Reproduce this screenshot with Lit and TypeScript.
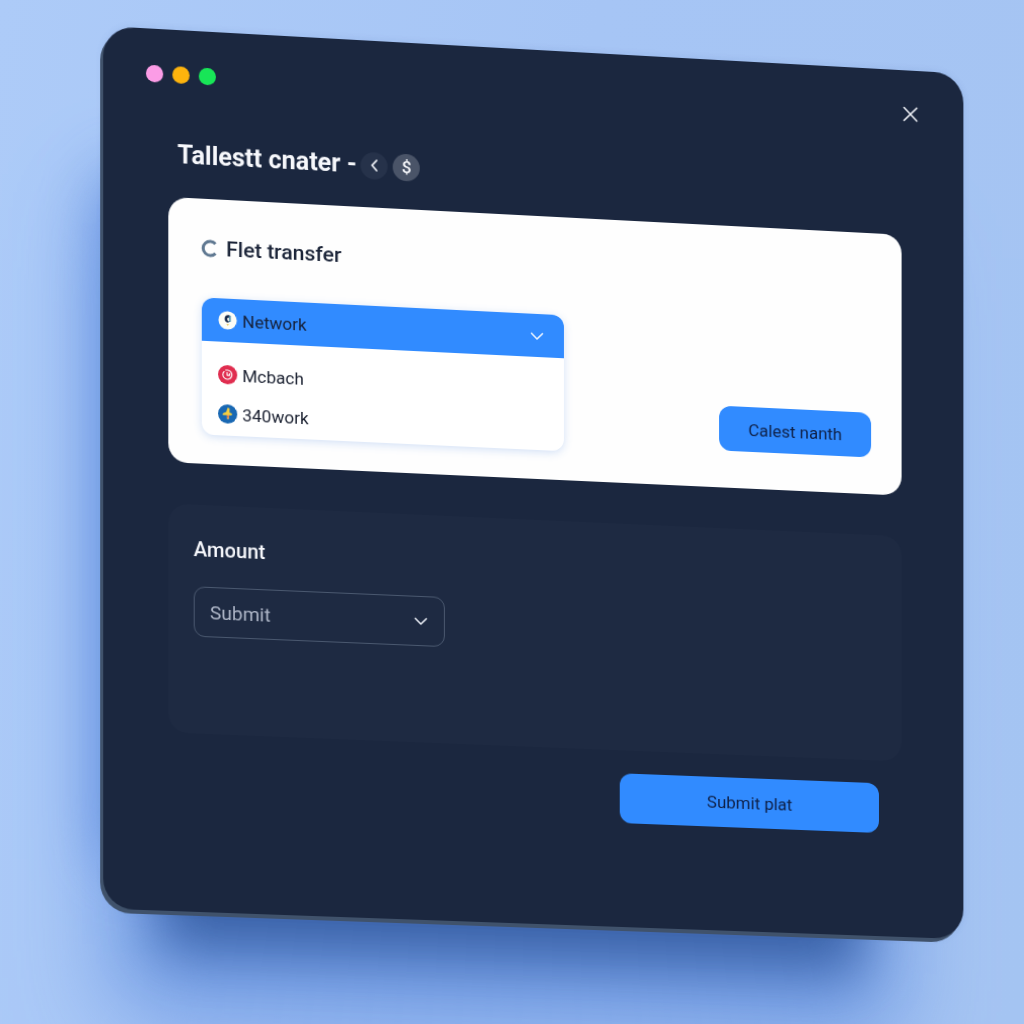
import { LitElement, html, css, svg } from "lit";
import { customElement, state } from "lit/decorators.js";

const chevronDown = html`<svg class="chevron" viewBox="0 0 14 14" aria-hidden="true">
  <path d="M1.500 4.500 7 10l5.500-5.500" />
</svg>`;

const networkMark = svg`
  <circle cx="10" cy="10" r="9.500" fill="#fdfdf6" />
  <path d="M12.300 4.800C9.500 3.600 6.700 5.400 6.900 8.600c.1 2.300 1.700 3.900 4.100 3.700l.3-1.400-1.700-1.200.1-2 1.600-.6z" fill="#17294a" />
  <path d="M11 5.400 13.200 5v6.200l-2.100.6.900-2.500-1-.8 1-1.200z" fill="#3d86a8" />
  <path d="M8.800 13.600h2.600l-1.200 2.400z" fill="#e9cf6a" />`;

const clockMark = svg`
  <circle cx="10" cy="10" r="10" fill="#e02d4f" />
  <path d="M6.700 6.400A4.700 4.700 0 1 0 10.200 5.300H7.600M9.500 7.400v3.200h2.600V8.500" fill="none" stroke="#fff" stroke-width="1.200" stroke-linejoin="round" />`;

const crossMark = svg`
  <circle cx="10" cy="10" r="10" fill="#1968b3" />
  <path d="M10 3.500 12 4v4.500l2.800 1-.8 1.800H4.800l.3-1.800L8.500 8z" fill="#f6cf3f" />
  <path d="M9.200 10.500h2.300v4.700H9.200z" fill="#f3b052" />
  <path d="M9.500 12h1.600v1.500H9.500z" fill="#c9534a" />`;

@customElement("app-root")
export class AppRoot extends LitElement {
  @state() private open = true;

  static styles = css`
    :host {
      display: block;
      font-family: Roboto, Inter, "Liberation Sans", sans-serif;
      color: #16213a;
    }
    * {
      box-sizing: border-box;
    }
    button,
    select {
      font: inherit;
      color: inherit;
      border: 0;
      margin: 0;
      padding: 0;
      background: none;
      cursor: pointer;
    }
    h1,
    h2,
    ul {
      margin: 0;
      padding: 0;
    }
    .stage {
      min-height: 100vh;
      padding: 50px 56px 64px 107px;
      overflow: hidden;
      background: linear-gradient(100deg, #adcbf8 0%, #a6c5f5 50%, #a5c4f2 100%);
    }
    .window {
      padding-bottom: 104px;
      border-radius: 30px;
      background: #1b273f;
      transform: perspective(2000px) rotateY(2.6deg) skewY(2.6deg);
      box-shadow:
        -3px 4px 0 #40526b,
        0 0 6px 1px rgba(64, 100, 170, 0.12),
        -24px 116px 52px -80px #3a62a8,
        -96px 50px 60px -96px #6390e0,
        -30px 144px 90px -40px #709ae3;
    }
    .bar {
      display: flex;
      align-items: center;
      justify-content: space-between;
      padding: 28px 38px 0 42px;
    }
    .dots {
      display: flex;
      gap: 9px;
    }
    .dot {
      width: 17px;
      height: 17px;
      border-radius: 50%;
    }
    .pink {
      background: #fb9ce6;
    }
    .amber {
      background: #fdb30d;
    }
    .green {
      background: #18e557;
    }
    .close {
      display: grid;
      place-items: center;
      width: 32px;
      height: 32px;
    }
    .close svg {
      width: 16px;
      height: 16px;
      fill: none;
      stroke: #f4f6fb;
      stroke-width: 1.6;
      stroke-linecap: round;
    }
    .title {
      display: flex;
      align-items: center;
      height: 32px;
      margin: 48px 60px 26px 73px;
      color: #f7f8fc;
    }
    .title h1 {
      font-size: 25px;
      line-height: 32px;
      font-weight: 700;
      margin-right: 4px;
      white-space: nowrap;
    }
    .round {
      display: grid;
      place-items: center;
      width: 27px;
      height: 27px;
      border-radius: 50%;
      background: #26324a;
      font-size: 17px;
      line-height: 24px;
      font-weight: 500;
    }
    .round + .round {
      margin-left: 5px;
      background: #4a5468;
    }
    .round svg {
      width: 14px;
      height: 14px;
      fill: none;
      stroke: #f4f6fb;
      stroke-width: 1.8;
      stroke-linecap: round;
      stroke-linejoin: round;
    }
    .card {
      margin: 0 63px 0 64px;
      padding: 34px 31px 29px 33px;
      border-radius: 19px;
      background: #fefefe;
    }
    .heading {
      display: flex;
      align-items: center;
      gap: 7px;
      margin-bottom: 34px;
    }
    .heading svg {
      width: 17px;
      height: 20px;
      overflow: visible;
      fill: none;
      stroke: #5f7891;
      stroke-width: 3;
    }
    .heading h2 {
      font-size: 21px;
      line-height: 30px;
      font-weight: 500;
      color: #1b2438;
    }
    .row {
      display: flex;
      justify-content: space-between;
      align-items: flex-end;
    }
    .dropdown {
      flex: 0 1 360px;
      min-height: 136px;
      border-radius: 12px;
      overflow: hidden;
      background: #fff;
      box-shadow: 0 2px 8px rgba(70, 130, 220, 0.24);
    }
    .trigger,
    .option {
      display: flex;
      align-items: center;
      gap: 5px;
      width: 100%;
      padding: 0 20px 0 16px;
      font-size: 17px;
      line-height: 24px;
      text-align: left;
    }
    .trigger {
      height: 43px;
      background: #318bff;
    }
    .trigger .chevron {
      margin-left: auto;
      stroke: #e8f2ff;
    }
    .mark {
      width: 19px;
      height: 19px;
      flex: none;
    }
    .options {
      list-style: none;
      padding: 13px 0 2px;
    }
    .option {
      height: 39px;
      color: #1a2030;
    }
    .chevron {
      width: 14px;
      height: 14px;
      fill: none;
      stroke: #e6eaf2;
      stroke-width: 1.6;
      stroke-linecap: round;
      stroke-linejoin: round;
    }
    .primary {
      background: #318bff;
      border-radius: 12px;
      font-size: 17px;
      line-height: 24px;
      color: #0f2148;
    }
    .compact {
      width: 154px;
      height: 45px;
      margin-bottom: 8px;
    }
    .panel {
      margin: 41px 63px 0 64px;
      padding: 30px 25px 96px;
      border-radius: 19px;
      background: #1e2a42;
    }
    .panel label {
      display: block;
      margin-bottom: 23px;
      font-size: 20px;
      line-height: 28px;
      font-weight: 500;
      color: #f7f8fc;
    }
    .field {
      display: grid;
      align-items: center;
      width: 249px;
      max-width: 100%;
    }
    .field > * {
      grid-area: 1 / 1;
    }
    .field select {
      appearance: none;
      width: 100%;
      height: 50px;
      padding: 0 44px 0 15px;
      border: 1px solid #4a586f;
      border-radius: 11px;
      font-size: 19px;
      color: #b0b8c9;
    }
    .field .chevron {
      justify-self: end;
      margin-right: 17px;
      pointer-events: none;
    }
    .actions {
      display: flex;
      justify-content: flex-end;
      margin: 23px 86px 0 64px;
    }
    .wide {
      width: 262px;
      height: 50px;
    }
  `;

  render() {
    return html`
      <main class="stage">
        <div class="window">
          <header class="bar">
            <div class="dots">
              <span class="dot pink"></span>
              <span class="dot amber"></span>
              <span class="dot green"></span>
            </div>
            <button class="close" aria-label="Close">
              <svg viewBox="0 0 16 16"><path d="M1.500 1.500l13 13M14.500 1.500l-13 13" /></svg>
            </button>
          </header>

          <div class="title">
            <h1>Tallestt cnater -</h1>
            <button class="round" aria-label="Back">
              <svg viewBox="0 0 14 14"><path d="M9 2 4.500 7 9 12" /></svg>
            </button>
            <button class="round">$</button>
          </div>

          <section class="card">
            <div class="heading">
              <svg viewBox="0 0 17 20" aria-hidden="true">
                <path d="M13.500 5.300A7 7 0 1 0 13.500 14.700" />
              </svg>
              <h2>Flet transfer</h2>
            </div>
            <div class="row">
              <div class="dropdown">
                <button
                  class="trigger"
                  aria-expanded=${this.open ? "true" : "false"}
                  @click=${() => (this.open = !this.open)}
                >
                  <svg class="mark" viewBox="0 0 20 20" aria-hidden="true">${networkMark}</svg>
                  <span>Network</span>
                  ${chevronDown}
                </button>
                ${this.open
                  ? html`<ul class="options">
                      <li>
                        <button class="option">
                          <svg class="mark" viewBox="0 0 20 20" aria-hidden="true">${clockMark}</svg>
                          <span>Mcbach</span>
                        </button>
                      </li>
                      <li>
                        <button class="option">
                          <svg class="mark" viewBox="0 0 20 20" aria-hidden="true">${crossMark}</svg>
                          <span>340work</span>
                        </button>
                      </li>
                    </ul>`
                  : null}
              </div>
              <button class="primary compact">Calest nanth</button>
            </div>
          </section>

          <section class="panel">
            <label for="amount">Amount</label>
            <div class="field">
              <select id="amount">
                <option>Submit</option>
              </select>
              ${chevronDown}
            </div>
          </section>

          <div class="actions">
            <button class="primary wide">Submit plat</button>
          </div>
        </div>
      </main>
    `;
  }
}
